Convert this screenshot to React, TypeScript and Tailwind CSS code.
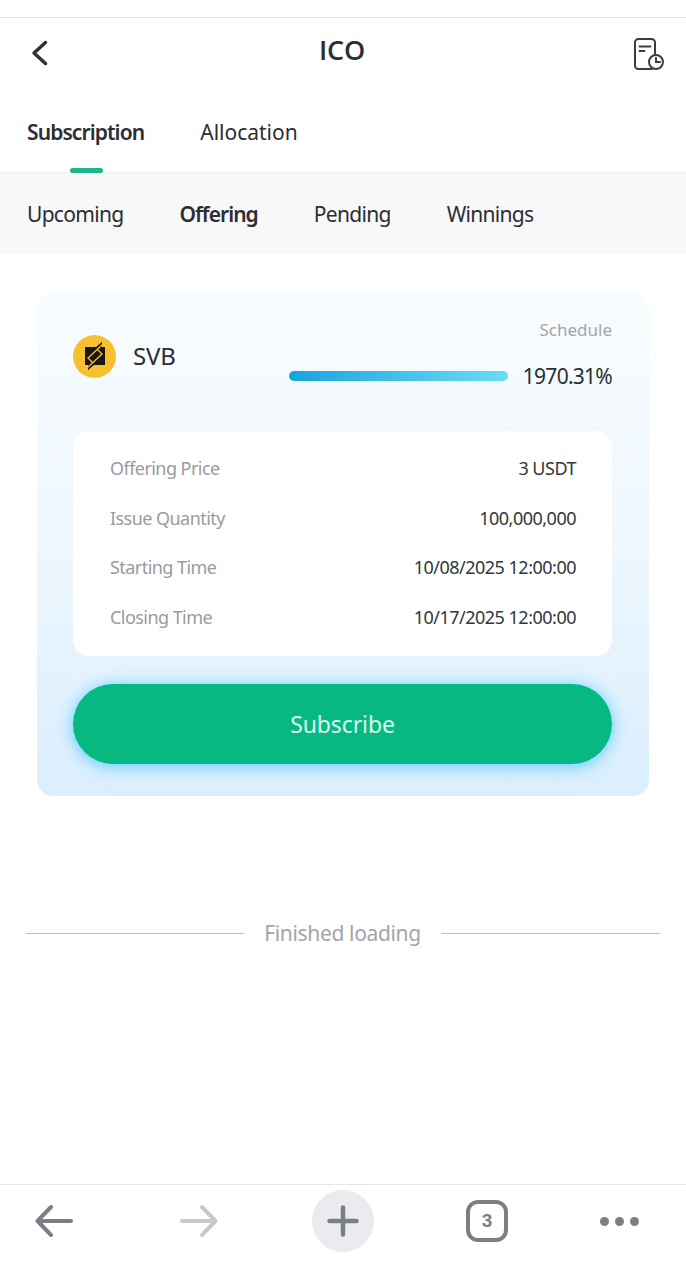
const rows = [
  { label: 'Offering Price', value: '3 USDT' },
  { label: 'Issue Quantity', value: '100,000,000' },
  { label: 'Starting Time', value: '10/08/2025 12:00:00' },
  { label: 'Closing Time', value: '10/17/2025 12:00:00' },
]

function RecordIcon() {
  return (
    <svg width="32" height="34" viewBox="0 0 32 34" fill="none" stroke="#3a3d42" strokeWidth="2" strokeLinecap="round">
      <path d="M19 32H5.500A3.500 3.500 0 0 1 2 28.500V5.500A3.500 3.500 0 0 1 5.500 2h13A3.500 3.500 0 0 1 22 5.500V17" />
      <path d="M6.500 9.500h11M6.500 14h5" />
      <circle cx="23" cy="25" r="7" />
      <path d="M23 21v4h4" />
    </svg>
  )
}

function CoinLogo() {
  return (
    <div className="w-[43px] h-[43px] rounded-full bg-[#f7c030] flex items-center justify-center">
      <svg width="24" height="30" viewBox="0 0 24 30">
        <path d="M2 6H13L19 1V6H22V24H11L5 29V24H2Z" fill="#1a1712" />
        <path d="M20 3 5 17l4.500 4.500M14.500 8.500 19 13 4 27" fill="none" stroke="#f7c030" strokeWidth="1.300" />
      </svg>
    </div>
  )
}

export default function App() {
  return (
    <div className="w-[686px] h-[1279px] bg-white flex flex-col text-[#2b2e33] font-['Noto_Sans',sans-serif] overflow-hidden">
      <div className="h-[18px] border-b border-[#e2e2e2] shrink-0" />

      <div className="h-[66px] shrink-0 flex items-center justify-between pl-[31px] pr-[21px]">
        <svg width="17" height="26" viewBox="0 0 17 26" fill="none" stroke="#2f3236" strokeWidth="3.500" strokeLinecap="round" strokeLinejoin="round" className="mt-[3px]">
          <path d="M14.500 2.500 3 13l11.500 10.500" />
        </svg>
        <h1 className="text-[27px] font-semibold leading-none -mt-[4px] ml-[3px] font-['Open_Sans',sans-serif] tracking-[-0.2px]">ICO</h1>
        <div className="mt-[5px]">
          <RecordIcon />
        </div>
      </div>

      <div className="h-[89px] shrink-0 flex gap-[56px] pl-[27px] text-[21px] border-b border-[#f0f0f0]">
        <div className="relative pt-[33px] leading-[30px] font-semibold tracking-[-0.9px]">
          Subscription
          <span className="absolute bottom-[-1px] left-[43px] w-[33px] h-[5px] rounded-full bg-[#1fb489]" />
        </div>
        <div className="pt-[33px] leading-[30px] tracking-[0px]">Allocation</div>
      </div>

      <div className="h-[81px] shrink-0 bg-[#f8f8f8] flex items-center gap-[56px] pl-[27px] pt-[3px] text-[21px] tracking-[-0.7px]">
        <span>Upcoming</span>
        <span className="font-semibold tracking-[-0.95px]">Offering</span>
        <span>Pending</span>
        <span>Winnings</span>
      </div>

      <div className="mt-[38px] mx-[37px] h-[504px] shrink-0 rounded-[16px] bg-gradient-to-b from-[#f9fcfe] via-[#eef7fe] to-[#daeefd] pl-[36px] pr-[37px] pt-[26px]">
        <div className="flex justify-between h-[113px]">
          <div className="flex items-center gap-[17px] h-[76px]">
            <CoinLogo />
            <span className="text-[24px] tracking-[-0.2px]">SVB</span>
          </div>
          <div className="flex flex-col items-end">
            <span className="text-[17px] leading-[24px] text-[#a3a5a8]">Schedule</span>
            <div className="mt-[19px] flex items-center gap-[15px]">
              <div className="w-[219px] h-[10px] rounded-full bg-gradient-to-r from-[#14a3de] to-[#68dcf6]" />
              <span className="text-[21px] leading-[30px] tracking-[-0.75px]">1970.31%</span>
            </div>
          </div>
        </div>

        <div className="h-[225px] rounded-[16px] bg-white pl-[37px] pr-[36px] pt-[13px] flex flex-col">
          {rows.map(r => (
            <div key={r.label} className="flex justify-between items-center h-[49.500px] shrink-0 text-[18px] tracking-[-0.55px]">
              <span className="text-[#999b9e]">{r.label}</span>
              <span className="text-[#33363a] tracking-[-0.5px]">{r.value}</span>
            </div>
          ))}
        </div>

        <button className="mt-[28px] w-full h-[80px] rounded-full bg-[#07b981] text-[#d9fbf0] text-[23px] tracking-[-0.1px] shadow-[0_2px_16px_rgba(70,200,255,0.9)]">
          Subscribe
        </button>
      </div>

      <div className="mt-[122px] mx-[26px] flex items-center justify-between text-[21px] text-[#a3a5a8]">
        <span className="w-[218px] h-px bg-[#bdbdbd]" />
        <span className="tracking-[-0.35px]">Finished loading</span>
        <span className="w-[219px] h-px bg-[#bdbdbd]" />
      </div>

      <div className="mt-auto h-[95px] shrink-0 border-t border-[#e6e6e6]">
        <div className="h-[72px] flex items-center pl-[35px]">
          <svg width="38" height="34" viewBox="0 0 38 34" fill="none" stroke="#7b7f85" strokeWidth="4" strokeLinecap="round" strokeLinejoin="round">
            <path d="M36 17H2.500M16 3 2.500 17 16 31" />
          </svg>
          <svg width="38" height="34" viewBox="0 0 38 34" fill="none" stroke="#c9c9c9" strokeWidth="4" strokeLinecap="round" strokeLinejoin="round" className="ml-[107px]">
            <path d="M2 17h33.500M22 3l13.500 14L22 31" />
          </svg>
          <div className="ml-[94px] w-[62px] h-[62px] rounded-full bg-[#eaebee] flex items-center justify-center">
            <svg width="32" height="32" viewBox="0 0 32 32" fill="none" stroke="#7b7f85" strokeWidth="4.500" strokeLinecap="round">
              <path d="M16 2.500v27M2.500 16h27" />
            </svg>
          </div>
          <div className="ml-[92px] w-[42px] h-[42px] rounded-[12px] border-[4px] border-[#7b7f85] flex items-center justify-center text-[19px] font-bold text-[#7b7f85] font-['Liberation_Sans',sans-serif]">
            3
          </div>
          <div className="ml-[92px] flex gap-[6px]">
            <span className="w-[9px] h-[9px] rounded-full bg-[#7b7f85]" />
            <span className="w-[9px] h-[9px] rounded-full bg-[#7b7f85]" />
            <span className="w-[9px] h-[9px] rounded-full bg-[#7b7f85]" />
          </div>
        </div>
      </div>
    </div>
  )
}
